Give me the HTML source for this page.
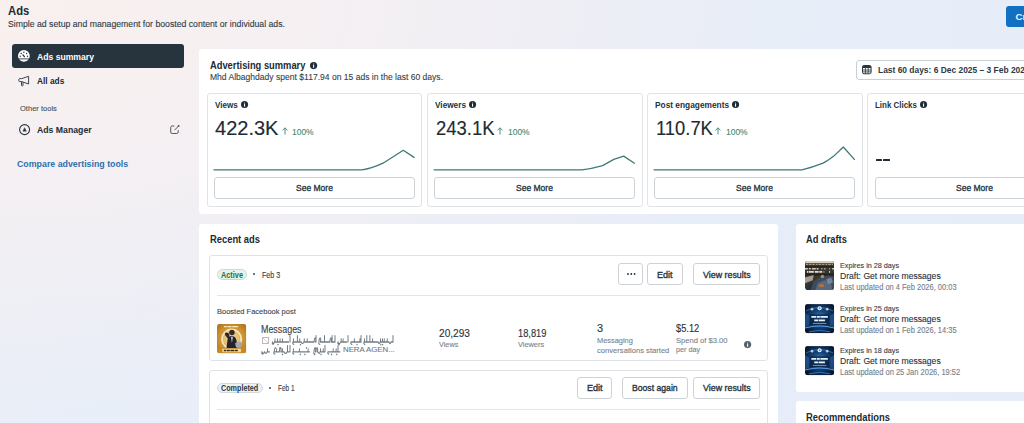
<!DOCTYPE html>
<html><head><meta charset="utf-8"><style>
html,body{margin:0;padding:0;}
body{width:1024px;height:423px;overflow:hidden;position:relative;font-family:"Liberation Sans",sans-serif;background:radial-gradient(ellipse 820px 420px at 0 0,rgba(249,240,238,1) 0%,rgba(247,240,241,0.85) 40%,rgba(240,238,246,0) 100%),linear-gradient(to right,#e9eef8 0%,#e6edf8 100%);}
.t{position:absolute;white-space:nowrap;}
.r{position:absolute;}
svg{position:absolute;overflow:visible;}
</style></head><body>
<div class="t" style="left:7.60px;top:5px;font-size:12.6px;line-height:12.6px;font-weight:700;color:#1c2b33;transform:scaleX(0.8949);transform-origin:0 0;">Ads</div><div class="t" style="left:7.80px;top:19px;font-size:9.7px;line-height:9.7px;font-weight:400;color:#2e3b45;transform:scaleX(0.8975);transform-origin:0 0;-webkit-text-stroke:0.12px #2e3b45;">Simple ad setup and management for boosted content or individual ads.</div><div class="r" style="left:1006px;top:5.6px;width:40px;height:21.3px;background:#1170c4;border-radius:3px;"></div><div class="t" style="left:1015.60px;top:12px;font-size:9.6px;line-height:9.6px;font-weight:700;color:#eef6ff;">Cr</div><div class="r" style="left:12.3px;top:44.3px;width:172.2px;height:24px;background:#27343e;border-radius:3px;"></div><svg style="left:17.9px;top:50.3px" width="11.8" height="11.8" viewBox="0 0 12 12"><circle cx="6" cy="6" r="6" fill="#fff"/><circle cx="2.3" cy="6.4" r="0.7" fill="#27343e"/><circle cx="3.3" cy="3.5" r="0.7" fill="#27343e"/><circle cx="6" cy="2.3" r="0.7" fill="#27343e"/><circle cx="8.7" cy="3.5" r="0.7" fill="#27343e"/><circle cx="9.7" cy="6.4" r="0.7" fill="#27343e"/><path d="M5.1 5.1L6.5 6.8" stroke="#27343e" stroke-width="1.3" stroke-linecap="round"/><rect x="0" y="8.6" width="12" height="0.9" fill="#27343e"/></svg><div class="t" style="left:36.80px;top:52px;font-size:9.9px;line-height:9.9px;font-weight:700;color:#ffffff;transform:scaleX(0.8721);transform-origin:0 0;">Ads summary</div><svg style="left:18px;top:74.5px" width="12.5" height="12.5" viewBox="0 0 12.5 12.5"><path d="M1.4 3.6C0.6 3.6 0.6 6.6 1.4 6.6H3.8L10.6 9V1.3L3.8 3.6Z" stroke="#3b4650" stroke-width="1" fill="none" stroke-linejoin="round"/><path d="M3.5 6.8V10.3C3.5 11.3 5 11.3 5 10.3V7.1" stroke="#3b4650" stroke-width="1" fill="none"/></svg><div class="t" style="left:36.80px;top:76px;font-size:9.4px;line-height:9.4px;font-weight:700;color:#1c2b33;transform:scaleX(0.8891);transform-origin:0 0;">All ads</div><div class="t" style="left:19.70px;top:106px;font-size:7.1px;line-height:7.1px;font-weight:400;color:#4a545c;transform:scaleX(1.0626);transform-origin:0 0;-webkit-text-stroke:0.12px #4a545c;">Other tools</div><svg style="left:18.6px;top:123.6px" width="11.2" height="11.2" viewBox="0 0 11.2 11.2"><circle cx="5.6" cy="5.6" r="5" stroke="#2a3640" stroke-width="1.1" fill="none"/><path d="M3.9 7.2L5.6 3.7L7.3 7.2Z" fill="#2a3640" stroke="#2a3640" stroke-width="0.5" stroke-linejoin="round"/></svg><div class="t" style="left:36.90px;top:125px;font-size:9.6px;line-height:9.6px;font-weight:700;color:#1c2b33;transform:scaleX(0.9075);transform-origin:0 0;">Ads Manager</div><svg style="left:169.8px;top:124.6px" width="9.8" height="9.2" viewBox="0 0 9.8 9.2"><path d="M4.3 1H2.2A1.5 1.5 0 0 0 0.7 2.5V7A1.5 1.5 0 0 0 2.2 8.5H6.7A1.5 1.5 0 0 0 8.2 7V5.2" stroke="#4f575e" stroke-width="1" fill="none"/><path d="M4.6 5.1L8.4 1.2" stroke="#4f575e" stroke-width="1"/><circle cx="8.6" cy="1.1" r="1" fill="#4f575e"/></svg><div class="t" style="left:17.00px;top:159px;font-size:9.9px;line-height:9.9px;font-weight:700;color:#2f70ad;transform:scaleX(0.8929);transform-origin:0 0;">Compare advertising tools</div><div class="r" style="left:199px;top:49px;width:900px;height:165px;background:#fff;border-radius:3px;"></div><div class="t" style="left:209.50px;top:60px;font-size:10.7px;line-height:10.7px;font-weight:700;color:#1c2b33;transform:scaleX(0.8729);transform-origin:0 0;">Advertising summary</div><svg style="left:310.0px;top:61.6px" width="7.2" height="7.2" viewBox="0 0 10 10"><circle cx="5" cy="5" r="5" fill="#1f2d37"/><rect x="4.25" y="4.3" width="1.5" height="3.7" fill="#fff"/><circle cx="5" cy="2.8" r="0.85" fill="#fff"/></svg><div class="t" style="left:209.50px;top:72px;font-size:9.9px;line-height:9.9px;font-weight:400;color:#36434d;transform:scaleX(0.8650);transform-origin:0 0;-webkit-text-stroke:0.12px #36434d;">Mhd Albaghdady spent $117.94 on 15 ads in the last 60 days.</div><div class="r" style="left:855.9px;top:59.8px;width:200px;height:20.3px;background:#fff;border:1px solid #c9cfd4;box-sizing:border-box;border-radius:3px;"></div><svg style="left:862.2px;top:65.2px" width="9.6" height="9.3" viewBox="0 0 9.6 9.3"><rect x="0.5" y="0.5" width="8.6" height="8.3" rx="1.6" fill="none" stroke="#2a3640" stroke-width="1"/><path d="M0.5 2.1A1.6 1.6 0 0 1 2.1 0.5H7.5A1.6 1.6 0 0 1 9.1 2.1V3H0.5Z" fill="#2a3640"/><path d="M3.4 3V8.8M6.2 3V8.8M0.5 5H9.1M0.5 6.9H9.1" stroke="#2a3640" stroke-width="0.8"/></svg><div class="t" style="left:877.70px;top:65px;font-size:9.9px;line-height:9.9px;font-weight:700;color:#2c3a44;transform:scaleX(0.8525);transform-origin:0 0;">Last 60 days: 6 Dec 2025 – 3 Feb 2026</div><div class="r" style="left:206.8px;top:93px;width:215.5px;height:113.5px;background:#fff;border:1px solid #e0e3e7;box-sizing:border-box;border-radius:3px;"></div><div class="t" style="left:214.80px;top:101px;font-size:8.6px;line-height:8.6px;font-weight:700;color:#25333d;transform:scaleX(0.9412);transform-origin:0 0;">Views</div><svg style="left:240.75px;top:101.05px" width="7.1" height="7.1" viewBox="0 0 10 10"><circle cx="5" cy="5" r="5" fill="#1f2d37"/><rect x="4.25" y="4.3" width="1.5" height="3.7" fill="#fff"/><circle cx="5" cy="2.8" r="0.85" fill="#fff"/></svg><div class="t" style="left:215.30px;top:119px;font-size:19.4px;line-height:19.4px;font-weight:400;color:#1c2b33;transform:scaleX(1.0328);transform-origin:0 0;-webkit-text-stroke:0.12px #1c2b33;">422.3K</div><svg style="left:281.8px;top:127.3px" width="6" height="7.5" viewBox="0 0 6 7.5"><path d="M3 7.5V0.9M0.5 3.4L3 0.8L5.5 3.4" stroke="#4f8f80" stroke-width="1" fill="none"/></svg><div class="t" style="left:292.30px;top:127px;font-size:9.9px;line-height:9.9px;font-weight:400;color:#3f8a72;transform:scaleX(0.8571);transform-origin:0 0;-webkit-text-stroke:0.12px #3f8a72;">100%</div><svg style="left:0;top:0" width="1024" height="423"><path d="M213.9 169.8H361.9C368 169.2 376 166.5 383 163.2L403.3 150.3L414 157.4" stroke="#3e7a78" stroke-width="1.3" fill="none" stroke-linejoin="round" stroke-linecap="round"/></svg><div class="r" style="left:214.0px;top:177.1px;width:200.5px;height:22px;background:#fff;border:1px solid #cdd2d7;box-sizing:border-box;border-radius:3px;"></div><div class="t" style="left:295.80px;top:183px;font-size:9.7px;line-height:9.7px;font-weight:400;color:#26333d;transform:scaleX(0.8775);transform-origin:0 0;-webkit-text-stroke:0.35px #26333d;">See More</div><div class="r" style="left:427.1px;top:93px;width:215.5px;height:113.5px;background:#fff;border:1px solid #e0e3e7;box-sizing:border-box;border-radius:3px;"></div><div class="t" style="left:435.10px;top:101px;font-size:8.6px;line-height:8.6px;font-weight:700;color:#25333d;transform:scaleX(0.9582);transform-origin:0 0;">Viewers</div><svg style="left:468.95px;top:101.05px" width="7.1" height="7.1" viewBox="0 0 10 10"><circle cx="5" cy="5" r="5" fill="#1f2d37"/><rect x="4.25" y="4.3" width="1.5" height="3.7" fill="#fff"/><circle cx="5" cy="2.8" r="0.85" fill="#fff"/></svg><div class="t" style="left:435.60px;top:119px;font-size:19.4px;line-height:19.4px;font-weight:400;color:#1c2b33;transform:scaleX(0.9531);transform-origin:0 0;-webkit-text-stroke:0.12px #1c2b33;">243.1K</div><svg style="left:496.7px;top:127.3px" width="6" height="7.5" viewBox="0 0 6 7.5"><path d="M3 7.5V0.9M0.5 3.4L3 0.8L5.5 3.4" stroke="#4f8f80" stroke-width="1" fill="none"/></svg><div class="t" style="left:507.60px;top:127px;font-size:9.9px;line-height:9.9px;font-weight:400;color:#3f8a72;transform:scaleX(0.8571);transform-origin:0 0;-webkit-text-stroke:0.12px #3f8a72;">100%</div><svg style="left:0;top:0" width="1024" height="423"><path d="M434.1 169.8H581.9C588 169.2 596 167.5 602.6 165.6L613.8 159.4L623.7 156.1L634.4 163.2" stroke="#3e7a78" stroke-width="1.3" fill="none" stroke-linejoin="round" stroke-linecap="round"/></svg><div class="r" style="left:434.3px;top:177.1px;width:200.5px;height:22px;background:#fff;border:1px solid #cdd2d7;box-sizing:border-box;border-radius:3px;"></div><div class="t" style="left:516.10px;top:183px;font-size:9.7px;line-height:9.7px;font-weight:400;color:#26333d;transform:scaleX(0.8775);transform-origin:0 0;-webkit-text-stroke:0.35px #26333d;">See More</div><div class="r" style="left:647.1px;top:93px;width:215.5px;height:113.5px;background:#fff;border:1px solid #e0e3e7;box-sizing:border-box;border-radius:3px;"></div><div class="t" style="left:655.10px;top:101px;font-size:8.6px;line-height:8.6px;font-weight:700;color:#25333d;transform:scaleX(0.9692);transform-origin:0 0;">Post engagements</div><svg style="left:731.6500000000001px;top:101.05px" width="7.1" height="7.1" viewBox="0 0 10 10"><circle cx="5" cy="5" r="5" fill="#1f2d37"/><rect x="4.25" y="4.3" width="1.5" height="3.7" fill="#fff"/><circle cx="5" cy="2.8" r="0.85" fill="#fff"/></svg><div class="t" style="left:655.60px;top:119px;font-size:19.4px;line-height:19.4px;font-weight:400;color:#1c2b33;transform:scaleX(0.9477);transform-origin:0 0;-webkit-text-stroke:0.12px #1c2b33;">110.7K</div><svg style="left:715.3px;top:127.3px" width="6" height="7.5" viewBox="0 0 6 7.5"><path d="M3 7.5V0.9M0.5 3.4L3 0.8L5.5 3.4" stroke="#4f8f80" stroke-width="1" fill="none"/></svg><div class="t" style="left:725.90px;top:127px;font-size:9.9px;line-height:9.9px;font-weight:400;color:#3f8a72;transform:scaleX(0.8571);transform-origin:0 0;-webkit-text-stroke:0.12px #3f8a72;">100%</div><svg style="left:0;top:0" width="1024" height="423"><path d="M654.1 169.8H801.9C808 168.5 816 166 823 163.2C827 161.2 830 159 833.8 156.1L843.3 147L854.4 159.4" stroke="#3e7a78" stroke-width="1.3" fill="none" stroke-linejoin="round" stroke-linecap="round"/></svg><div class="r" style="left:654.3000000000001px;top:177.1px;width:200.5px;height:22px;background:#fff;border:1px solid #cdd2d7;box-sizing:border-box;border-radius:3px;"></div><div class="t" style="left:736.10px;top:183px;font-size:9.7px;line-height:9.7px;font-weight:400;color:#26333d;transform:scaleX(0.8775);transform-origin:0 0;-webkit-text-stroke:0.35px #26333d;">See More</div><div class="r" style="left:867.3px;top:93px;width:215.5px;height:113.5px;background:#fff;border:1px solid #e0e3e7;box-sizing:border-box;border-radius:3px;"></div><div class="t" style="left:875.30px;top:101px;font-size:8.6px;line-height:8.6px;font-weight:700;color:#25333d;transform:scaleX(0.9229);transform-origin:0 0;">Link Clicks</div><svg style="left:920.0500000000001px;top:101.05px" width="7.1" height="7.1" viewBox="0 0 10 10"><circle cx="5" cy="5" r="5" fill="#1f2d37"/><rect x="4.25" y="4.3" width="1.5" height="3.7" fill="#fff"/><circle cx="5" cy="2.8" r="0.85" fill="#fff"/></svg><div class="r" style="left:875.6px;top:158.9px;width:6.4px;height:2.1px;background:#1f2b35;border-radius:0.5px;"></div><div class="r" style="left:883.4px;top:158.9px;width:6.4px;height:2.1px;background:#1f2b35;border-radius:0.5px;"></div><div class="r" style="left:874.5px;top:177.1px;width:200.5px;height:22px;background:#fff;border:1px solid #cdd2d7;box-sizing:border-box;border-radius:3px;"></div><div class="t" style="left:956.30px;top:183px;font-size:9.7px;line-height:9.7px;font-weight:400;color:#26333d;transform:scaleX(0.8775);transform-origin:0 0;-webkit-text-stroke:0.35px #26333d;">See More</div><div class="r" style="left:199px;top:224px;width:579px;height:300px;background:#fff;border-radius:3px;"></div><div class="t" style="left:209.70px;top:235px;font-size:10.3px;line-height:10.3px;font-weight:700;color:#1c2b33;transform:scaleX(0.9099);transform-origin:0 0;">Recent ads</div><div class="r" style="left:209.2px;top:255.3px;width:559px;height:106px;background:#fff;border:1px solid #dfe3e7;box-sizing:border-box;border-radius:3px;"></div><div class="r" style="left:217px;top:269.2px;width:30.3px;height:10.4px;background:#e6f3ea;border:1px solid #c3dfca;box-sizing:border-box;border-radius:6px;"></div><div class="t" style="left:221.30px;top:271px;font-size:8.3px;line-height:8.3px;font-weight:700;color:#23704a;transform:scaleX(0.8832);transform-origin:0 0;">Active</div><div class="r" style="left:253px;top:273.3px;width:2px;height:2px;background:#3b4852;border-radius:2px;"></div><div class="t" style="left:261.70px;top:271px;font-size:8.3px;line-height:8.3px;font-weight:400;color:#33404a;transform:scaleX(0.8576);transform-origin:0 0;-webkit-text-stroke:0.12px #33404a;">Feb 3</div><div class="r" style="left:618.3px;top:263.2px;width:24.4px;height:22px;background:#fff;border:1px solid #cdd2d7;box-sizing:border-box;border-radius:3px;"></div><svg style="left:626.5px;top:273.2px" width="9" height="2" viewBox="0 0 9 2"><circle cx="1" cy="1" r="0.9" fill="#1f2d37"/><circle cx="4.3" cy="1" r="0.9" fill="#1f2d37"/><circle cx="7.6" cy="1" r="0.9" fill="#1f2d37"/></svg><div class="r" style="left:647.3px;top:263.2px;width:35.7px;height:22px;background:#fff;border:1px solid #cdd2d7;box-sizing:border-box;border-radius:3px;"></div><div class="t" style="left:657.35px;top:270px;font-size:9.5px;line-height:9.5px;font-weight:400;color:#26333d;transform:scaleX(0.9530);transform-origin:0 0;-webkit-text-stroke:0.35px #26333d;">Edit</div><div class="r" style="left:693px;top:263.2px;width:67.4px;height:22px;background:#fff;border:1px solid #cdd2d7;box-sizing:border-box;border-radius:3px;"></div><div class="t" style="left:702.90px;top:270px;font-size:9.5px;line-height:9.5px;font-weight:400;color:#26333d;transform:scaleX(0.9327);transform-origin:0 0;-webkit-text-stroke:0.35px #26333d;">View results</div><div class="r" style="left:217px;top:295.2px;width:543.4px;height:1px;background:#e2e5e9;border-radius:0px;"></div><div class="t" style="left:217.00px;top:308px;font-size:7.8px;line-height:7.8px;font-weight:400;color:#3d4850;transform:scaleX(0.9616);transform-origin:0 0;-webkit-text-stroke:0.12px #3d4850;">Boosted Facebook post</div><svg style="left:216.8px;top:323.5px" width="29.3" height="29.3" viewBox="0 0 30 30"><defs><radialGradient id="g1" cx="50%" cy="50%" r="70%"><stop offset="0" stop-color="#f5dc9a"/><stop offset="0.5" stop-color="#d49a38"/><stop offset="1" stop-color="#a96f1a"/></radialGradient><clipPath id="cpg"><rect width="30" height="30" rx="2.5"/></clipPath></defs><g clip-path="url(#cpg)"><rect width="30" height="30" fill="url(#g1)"/><circle cx="15" cy="15.5" r="9.8" fill="none" stroke="#fbf1d2" stroke-width="2" opacity="0.85"/><circle cx="15" cy="15.5" r="8.5" fill="#ead28f" opacity="0.55"/><path d="M7 2.6H23" stroke="#fff3cf" stroke-width="1.3" stroke-dasharray="3 0.8 4 0.8 6" opacity="0.9"/><path d="M9.5 26L10.8 16C11.5 13 13.5 12 15.5 12.2C18 12.5 19.5 14 20 17L21 26Z" fill="#24242c"/><path d="M11.5 15.5L8.2 11C7.8 9.8 8.5 8.5 9.6 8.8L12.3 9.6L12.8 12.5Z" fill="#28283a"/><circle cx="15.3" cy="8.6" r="2.8" fill="#3a2a1f"/><path d="M14.4 13L15.3 19.5L16.2 13Z" fill="#eaeaea"/><path d="M18.5 19.5L24.5 18L25.5 23L19.5 24Z" fill="#a3a9b1"/><rect x="0" y="24.6" width="30" height="5.4" fill="#c48a2a"/><rect x="5.5" y="25.3" width="19" height="3.6" rx="0.5" fill="#efd9a0"/><path d="M7 27.1H23" stroke="#3a2a16" stroke-width="1.5" stroke-dasharray="2.5 0.6 3 0.6 4 0.6 3" /></g></svg><div class="t" style="left:261.20px;top:324px;font-size:10.6px;line-height:10.6px;font-weight:400;color:#36424c;transform:scaleX(0.8404);transform-origin:0 0;-webkit-text-stroke:0.12px #36424c;">Messages</div><div class="r" style="left:261.8px;top:336.6px;width:7px;height:7px;background:#fff;border:1px solid #c6b7b4;box-sizing:border-box;border-radius:0.5px;"></div><svg style="left:262.8px;top:337.6px" width="5" height="5" viewBox="0 0 5 5"><path d="M0 0L5 5" stroke="#c6b7b4" stroke-width="0.7"/></svg><svg style="left:0;top:0" width="1024" height="423"><g transform="translate(0 342) scale(1 1.3) translate(0 -342)"><path d="M272.5 342.0Q273.5 344.4 274.5 342.0L274.8 342.0L275.0 339.7M275.0 342.0L277.1 342.0L277.4 342.0L277.6 339.7M277.6 342.0L279.6 342.0L279.9 342.0L280.1 339.7M280.1 342.0L282.0 342.0L282.3 342.0L282.5 339.7M282.5 342.0L284.1 342.0L286.7 342.0L288.6 342.0M272.5 342.0Q271.7 343.5 273.3 343.8M290.0 342.0L290.0 337.1M293.0 342.0L293.3 342.0L293.5 339.7M293.5 342.0L295.0 342.0L297.0 342.0L297.4 342.0L297.4 337.2M297.4 342.0L299.3 342.0L299.6 342.0L299.8 339.7M299.8 342.0L301.2 342.0Q302.5 344.4 303.8 342.0L304.1 342.0L304.3 339.7M304.3 342.0L306.8 342.0L307.1 342.0L307.3 339.7M307.3 342.0L309.4 342.0L312.2 342.0L314.1 342.0L314.1 342.0Q314.3 338.8 315.4 339.0Q316.3 339.5 315.5 342.0L316.0 342.0M293.0 342.0Q292.2 343.5 293.8 343.8M316.0 342.0L316.0 337.1M319.0 342.0L319.0 342.0Q319.2 338.8 320.3 339.0Q321.2 339.5 320.4 342.0L321.9 342.0L324.1 342.0L324.5 342.0L324.5 337.2M324.5 342.0L326.7 342.0L329.8 342.0L329.8 342.0Q330.0 338.8 331.1 339.0Q332.0 339.5 331.2 342.0L331.7 342.0L332.1 342.0L332.1 337.2M332.1 342.0L334.9 342.0M319.0 342.0Q318.2 343.5 319.8 343.8M335.0 342.0L335.0 337.1M338.0 342.0Q339.4 344.4 340.7 342.0L341.0 342.0L341.2 339.7M341.2 342.0L342.6 342.0L342.9 342.0L343.1 339.7M343.1 342.0L344.8 342.0L346.7 342.0M338.0 342.0Q337.2 343.5 338.8 343.8M348.0 342.0L348.0 337.1M351.0 342.0L353.9 342.0L354.2 342.0L354.4 339.7M354.4 342.0L356.3 342.0L359.5 342.0L359.8 342.0L360.0 339.7M360.0 342.0L361.0 342.0M351.0 342.0Q350.2 343.5 351.8 343.8M361.0 342.0L361.0 337.1M364.0 342.0L364.3 342.0L364.5 339.7M364.5 342.0L366.4 342.0L366.8 342.0L366.8 337.2M366.8 342.0L369.5 342.0L369.9 342.0L369.9 337.2M369.9 342.0L372.2 342.0L372.5 342.0L372.7 339.7M372.7 342.0L375.2 342.0L378.2 342.0Q379.1 344.4 380.1 342.0L380.4 342.0L380.6 339.7M380.6 342.0L382.0 342.0L382.3 342.0L382.5 339.7M382.5 342.0L383.8 342.0L384.1 342.0L384.3 339.7M384.3 342.0L386.8 342.0L387.1 342.0L387.3 339.7M387.3 342.0L389.0 342.0Q390.0 344.4 391.0 342.0L393.0 342.0M364.0 342.0Q363.2 343.5 364.8 343.8M393.0 342.0L393.0 337.1" stroke="#737c84" stroke-width="1.0" fill="none" stroke-linecap="round" stroke-linejoin="round"/><circle cx="278.0" cy="344.0" r="0.65" fill="#737c84"/><circle cx="300.5" cy="344.0" r="0.65" fill="#737c84"/><circle cx="339.0" cy="344.0" r="0.65" fill="#737c84"/><circle cx="357.0" cy="344.0" r="0.65" fill="#737c84"/><circle cx="380.8" cy="344.0" r="0.65" fill="#737c84"/><circle cx="382.6" cy="344.0" r="0.65" fill="#737c84"/></g><g transform="translate(0 351.8) scale(1 1.3) translate(0 -351.8)"><path d="M262.0 351.8Q263.3 354.2 264.6 351.8Q265.8 354.2 267.1 351.8L267.4 351.8L267.6 349.5M267.6 351.8L269.6 351.8M262.0 351.8Q261.2 353.3 262.8 353.6M274.0 351.8L274.3 351.8L274.5 349.5M274.5 351.8L276.2 351.8L276.5 351.8L276.7 349.5M276.7 351.8L279.4 351.8L279.4 351.8Q279.6 348.6 280.7 348.8Q281.6 349.3 280.8 351.8L282.1 351.8L282.4 351.8L282.6 349.5M282.6 351.8L284.1 351.8Q285.6 354.2 287.1 351.8L287.5 351.8L287.5 347.0M287.5 351.8L289.6 351.8M274.0 351.8Q273.2 353.3 274.8 353.6M290.0 351.8L290.0 346.9M293.0 351.8L293.3 351.8L293.5 349.5M293.5 351.8L296.2 351.8L299.0 351.8L299.3 351.8L299.5 349.5M299.5 351.8L301.2 351.8L303.5 351.8L305.3 351.8L307.7 351.8L308.0 351.8L308.2 349.5M308.2 351.8L309.6 351.8M293.0 351.8Q292.2 353.3 293.8 353.6M314.0 351.8L314.0 351.8Q314.2 348.6 315.3 348.8Q316.2 349.3 315.4 351.8L316.0 351.8L316.0 351.8Q316.2 348.6 317.3 348.8Q318.2 349.3 317.4 351.8L318.0 351.8Q319.0 354.2 320.1 351.8L320.4 351.8L320.6 349.5M320.6 351.8L322.8 351.8L323.1 351.8L323.3 349.5M323.3 351.8L325.0 351.8M314.0 351.8Q313.2 353.3 314.8 353.6M325.0 351.8L325.0 346.9M328.0 351.8L330.1 351.8L332.8 351.8L333.1 351.8L333.3 349.5M333.3 351.8L335.7 351.8L336.0 351.8L336.2 349.5M336.2 351.8L337.6 351.8L338.0 351.8L338.0 347.0M338.0 351.8L339.9 351.8M328.0 351.8Q327.2 353.3 328.8 353.6" stroke="#737c84" stroke-width="1.0" fill="none" stroke-linecap="round" stroke-linejoin="round"/><circle cx="275.3" cy="348.8" r="0.65" fill="#737c84"/><circle cx="279.9" cy="348.8" r="0.65" fill="#737c84"/><circle cx="282.6" cy="353.8" r="0.65" fill="#737c84"/><circle cx="300.3" cy="353.8" r="0.65" fill="#737c84"/><circle cx="304.9" cy="353.8" r="0.65" fill="#737c84"/><circle cx="306.5" cy="348.8" r="0.65" fill="#737c84"/><circle cx="314.6" cy="353.8" r="0.65" fill="#737c84"/><circle cx="321.0" cy="353.8" r="0.65" fill="#737c84"/><circle cx="331.6" cy="353.8" r="0.65" fill="#737c84"/><circle cx="336.8" cy="353.8" r="0.65" fill="#737c84"/></g></svg><div class="t" style="left:342.80px;top:346px;font-size:8.1px;line-height:8.1px;font-weight:400;color:#6f7a83;transform:scaleX(0.9670);transform-origin:0 0;-webkit-text-stroke:0.12px #6f7a83;">NERA AGEN...</div><div class="t" style="left:438.60px;top:328px;font-size:10.7px;line-height:10.7px;font-weight:400;color:#26333d;transform:scaleX(0.9473);transform-origin:0 0;-webkit-text-stroke:0.12px #26333d;">20,293</div><div class="t" style="left:438.60px;top:341px;font-size:7.7px;line-height:7.7px;font-weight:400;color:#7a848c;transform:scaleX(0.9461);transform-origin:0 0;-webkit-text-stroke:0.12px #7a848c;">Views</div><div class="t" style="left:517.80px;top:328px;font-size:10.7px;line-height:10.7px;font-weight:400;color:#26333d;transform:scaleX(0.8679);transform-origin:0 0;-webkit-text-stroke:0.12px #26333d;">18,819</div><div class="t" style="left:517.80px;top:341px;font-size:7.7px;line-height:7.7px;font-weight:400;color:#7a848c;transform:scaleX(0.9579);transform-origin:0 0;-webkit-text-stroke:0.12px #7a848c;">Viewers</div><div class="t" style="left:597.00px;top:323px;font-size:10.9px;line-height:10.9px;font-weight:400;color:#26333d;-webkit-text-stroke:0.12px #26333d;">3</div><div class="t" style="left:597.00px;top:337px;font-size:8.1px;line-height:8.1px;font-weight:400;color:#7a848c;transform:scaleX(0.9166);transform-origin:0 0;-webkit-text-stroke:0.12px #7a848c;">Messaging</div><div class="t" style="left:597.00px;top:347px;font-size:8.1px;line-height:8.1px;font-weight:400;color:#7a848c;transform:scaleX(0.9405);transform-origin:0 0;-webkit-text-stroke:0.12px #7a848c;">conversations started</div><div class="t" style="left:676.40px;top:323px;font-size:10.9px;line-height:10.9px;font-weight:400;color:#26333d;transform:scaleX(0.8506);transform-origin:0 0;-webkit-text-stroke:0.12px #26333d;">$5.12</div><div class="t" style="left:676.40px;top:337px;font-size:8.1px;line-height:8.1px;font-weight:400;color:#7a848c;transform:scaleX(0.9373);transform-origin:0 0;-webkit-text-stroke:0.12px #7a848c;">Spend of $3.00</div><div class="t" style="left:676.40px;top:346px;font-size:8.1px;line-height:8.1px;font-weight:400;color:#7a848c;transform:scaleX(0.8921);transform-origin:0 0;-webkit-text-stroke:0.12px #7a848c;">per day</div><svg style="left:743.8px;top:340.79999999999995px" width="7.2" height="7.2" viewBox="0 0 10 10"><circle cx="5" cy="5" r="5" fill="#56616b"/><rect x="4.25" y="4.3" width="1.5" height="3.7" fill="#fff"/><circle cx="5" cy="2.8" r="0.85" fill="#fff"/></svg><div class="r" style="left:209.1px;top:369.5px;width:559px;height:120px;background:#fff;border:1px solid #dfe3e7;box-sizing:border-box;border-radius:3px;"></div><div class="r" style="left:217.1px;top:382.8px;width:45.5px;height:10.3px;background:#eef1f4;border:1px solid #d3d8dd;box-sizing:border-box;border-radius:6px;"></div><div class="t" style="left:221.20px;top:384px;font-size:8.6px;line-height:8.6px;font-weight:700;color:#2c3a44;transform:scaleX(0.8395);transform-origin:0 0;">Completed</div><div class="r" style="left:269.2px;top:387px;width:2px;height:2px;background:#3b4852;border-radius:2px;"></div><div class="t" style="left:277.70px;top:384px;font-size:9.2px;line-height:9.2px;font-weight:400;color:#33404a;transform:scaleX(0.7014);transform-origin:0 0;-webkit-text-stroke:0.12px #33404a;">Feb 1</div><div class="r" style="left:577.1px;top:376.9px;width:34.9px;height:22px;background:#fff;border:1px solid #cdd2d7;box-sizing:border-box;border-radius:3px;"></div><div class="t" style="left:586.75px;top:383px;font-size:9.5px;line-height:9.5px;font-weight:400;color:#26333d;transform:scaleX(0.9530);transform-origin:0 0;-webkit-text-stroke:0.35px #26333d;">Edit</div><div class="r" style="left:622.1px;top:376.9px;width:65.6px;height:22px;background:#fff;border:1px solid #cdd2d7;box-sizing:border-box;border-radius:3px;"></div><div class="t" style="left:632.10px;top:383px;font-size:9.5px;line-height:9.5px;font-weight:400;color:#26333d;transform:scaleX(0.9088);transform-origin:0 0;-webkit-text-stroke:0.35px #26333d;">Boost again</div><div class="r" style="left:693.1px;top:376.9px;width:67.3px;height:22px;background:#fff;border:1px solid #cdd2d7;box-sizing:border-box;border-radius:3px;"></div><div class="t" style="left:702.95px;top:383px;font-size:9.5px;line-height:9.5px;font-weight:400;color:#26333d;transform:scaleX(0.9327);transform-origin:0 0;-webkit-text-stroke:0.35px #26333d;">View results</div><div class="r" style="left:217px;top:408.6px;width:543.4px;height:1px;background:#e2e5e9;border-radius:0px;"></div><div class="t" style="left:217.00px;top:422px;font-size:7.8px;line-height:7.8px;font-weight:400;color:#3d4850;transform:scaleX(0.9616);transform-origin:0 0;-webkit-text-stroke:0.12px #3d4850;">Boosted Facebook post</div><div class="r" style="left:795.6px;top:223.7px;width:300px;height:168px;background:#fff;border-radius:3px;"></div><div class="t" style="left:806.30px;top:235px;font-size:10.3px;line-height:10.3px;font-weight:700;color:#1c2b33;transform:scaleX(0.9048);transform-origin:0 0;">Ad drafts</div><svg style="left:805.4px;top:261.3px" width="29" height="29" viewBox="0 0 30 30"><defs><clipPath id="cp0"><rect width="30" height="30" rx="2.5"/></clipPath></defs><g clip-path="url(#cp0)"><rect width="30" height="30" fill="#3a3632"/><rect y="0" width="30" height="2.2" fill="#d9d0c0"/><path d="M1 3.5H29" stroke="#a89c8a" stroke-width="1.2" stroke-dasharray="2 0.8 3 0.8 2.5 1"/><rect y="5.5" width="30" height="1" fill="#1e1b18"/><path d="M0 8H30" stroke="#cfc5b2" stroke-width="1.6" stroke-dasharray="3 1 2 1.2 4 0.8 2"/><path d="M2 11.2H28" stroke="#e4dccb" stroke-width="1.8" stroke-dasharray="1.5 0.6 5 1 4 0.7 3"/><rect y="13" width="30" height="2" fill="#23201d"/><path d="M0 17L9 14.5L8 20L0 23Z" fill="#c9c2b5" opacity="0.75"/><path d="M6 30L9 21L16 16.5L24 15L30 16.5V30Z" fill="#3e4b5b"/><path d="M11 30L13 23L20 20L27 22L28 30Z" fill="#58687d"/><path d="M1 30L3 24L7 23L6 30Z" fill="#243140"/><circle cx="18" cy="16" r="1.8" fill="#b59574" opacity="0.9"/><ellipse cx="17" cy="25.5" rx="2.8" ry="1.6" fill="#c26b34"/><path d="M22 19L27 17L29 22L24 24Z" fill="#8595aa" opacity="0.8"/></g></svg><div class="t" style="left:839.80px;top:262px;font-size:7.5px;line-height:7.5px;font-weight:400;color:#36424c;transform:scaleX(0.9644);transform-origin:0 0;-webkit-text-stroke:0.12px #36424c;">Expires in 28 days</div><div class="t" style="left:839.80px;top:271px;font-size:9.7px;line-height:9.7px;font-weight:400;color:#26333d;transform:scaleX(0.8863);transform-origin:0 0;-webkit-text-stroke:0.12px #26333d;">Draft: Get more messages</div><div class="t" style="left:839.80px;top:282px;font-size:9.4px;line-height:9.4px;font-weight:400;color:#75808a;transform:scaleX(0.7989);transform-origin:0 0;-webkit-text-stroke:0.12px #75808a;">Last updated on 4 Feb 2026, 00:03</div><svg style="left:805.4px;top:303.7px" width="29.2" height="29.4" viewBox="0 0 30 30"><defs><radialGradient id="gb1" cx="50%" cy="48%" r="62%"><stop offset="0" stop-color="#3d88d2"/><stop offset="0.4" stop-color="#18487f"/><stop offset="1" stop-color="#06142a"/></radialGradient><clipPath id="cpb1"><rect width="30" height="30" rx="2.5"/></clipPath></defs><g clip-path="url(#cpb1)"><rect width="30" height="30" fill="url(#gb1)"/><path d="M1 7Q15 0 29 7" stroke="#7cc2ff" stroke-width="0.7" fill="none" opacity="0.6"/><circle cx="7.2" cy="5.2" r="1.4" fill="#9fd0ff"/><circle cx="15" cy="4.3" r="2.1" fill="#eef7ff"/><circle cx="15" cy="4.3" r="1" fill="#4a86c0"/><circle cx="22.8" cy="5.2" r="1.4" fill="#9fd0ff"/><rect x="5" y="10.5" width="20" height="11" fill="#08203f" opacity="0.7"/><path d="M6.5 13.2H23.5" stroke="#f4f9ff" stroke-width="1.8" stroke-dasharray="5 0.7 3 0.6 8" opacity="0.95"/><path d="M9.5 16.8H20.5" stroke="#f4f9ff" stroke-width="1.9" stroke-dasharray="4 0.6 7" opacity="0.95"/><rect x="8" y="19.5" width="14" height="0.8" fill="#9cc8f0" opacity="0.8"/><path d="M0 24.5Q15 20.5 30 24.5" stroke="#6cb6ff" stroke-width="1.1" fill="none" opacity="0.8"/><path d="M4 28.5Q15 25.5 26 28.5" stroke="#4a98e8" stroke-width="1" fill="none" opacity="0.7"/><path d="M0 9L4 12V22L0 25Z M30 9L26 12V22L30 25Z" fill="#3a8ae0" opacity="0.35"/></g></svg><div class="t" style="left:839.80px;top:305px;font-size:7.5px;line-height:7.5px;font-weight:400;color:#36424c;transform:scaleX(0.9644);transform-origin:0 0;-webkit-text-stroke:0.12px #36424c;">Expires in 25 days</div><div class="t" style="left:839.80px;top:314px;font-size:9.7px;line-height:9.7px;font-weight:400;color:#26333d;transform:scaleX(0.8863);transform-origin:0 0;-webkit-text-stroke:0.12px #26333d;">Draft: Get more messages</div><div class="t" style="left:839.80px;top:325px;font-size:9.4px;line-height:9.4px;font-weight:400;color:#75808a;transform:scaleX(0.7989);transform-origin:0 0;-webkit-text-stroke:0.12px #75808a;">Last updated on 1 Feb 2026, 14:35</div><svg style="left:805.4px;top:346.1px" width="29.2" height="29.4" viewBox="0 0 30 30"><defs><radialGradient id="gb2" cx="50%" cy="48%" r="62%"><stop offset="0" stop-color="#3d88d2"/><stop offset="0.4" stop-color="#18487f"/><stop offset="1" stop-color="#06142a"/></radialGradient><clipPath id="cpb2"><rect width="30" height="30" rx="2.5"/></clipPath></defs><g clip-path="url(#cpb2)"><rect width="30" height="30" fill="url(#gb2)"/><path d="M1 7Q15 0 29 7" stroke="#7cc2ff" stroke-width="0.7" fill="none" opacity="0.6"/><circle cx="7.2" cy="5.2" r="1.4" fill="#9fd0ff"/><circle cx="15" cy="4.3" r="2.1" fill="#eef7ff"/><circle cx="15" cy="4.3" r="1" fill="#4a86c0"/><circle cx="22.8" cy="5.2" r="1.4" fill="#9fd0ff"/><rect x="5" y="10.5" width="20" height="11" fill="#08203f" opacity="0.7"/><path d="M6.5 13.2H23.5" stroke="#f4f9ff" stroke-width="1.8" stroke-dasharray="5 0.7 3 0.6 8" opacity="0.95"/><path d="M9.5 16.8H20.5" stroke="#f4f9ff" stroke-width="1.9" stroke-dasharray="4 0.6 7" opacity="0.95"/><rect x="8" y="19.5" width="14" height="0.8" fill="#9cc8f0" opacity="0.8"/><path d="M0 24.5Q15 20.5 30 24.5" stroke="#6cb6ff" stroke-width="1.1" fill="none" opacity="0.8"/><path d="M4 28.5Q15 25.5 26 28.5" stroke="#4a98e8" stroke-width="1" fill="none" opacity="0.7"/><path d="M0 9L4 12V22L0 25Z M30 9L26 12V22L30 25Z" fill="#3a8ae0" opacity="0.35"/></g></svg><div class="t" style="left:839.80px;top:347px;font-size:7.5px;line-height:7.5px;font-weight:400;color:#36424c;transform:scaleX(0.9644);transform-origin:0 0;-webkit-text-stroke:0.12px #36424c;">Expires in 18 days</div><div class="t" style="left:839.80px;top:356px;font-size:9.7px;line-height:9.7px;font-weight:400;color:#26333d;transform:scaleX(0.8863);transform-origin:0 0;-webkit-text-stroke:0.12px #26333d;">Draft: Get more messages</div><div class="t" style="left:839.80px;top:367px;font-size:9.4px;line-height:9.4px;font-weight:400;color:#75808a;transform:scaleX(0.8006);transform-origin:0 0;-webkit-text-stroke:0.12px #75808a;">Last updated on 25 Jan 2026, 19:52</div><div class="r" style="left:795.6px;top:401px;width:300px;height:100px;background:#fff;border-radius:3px;"></div><div class="t" style="left:806.00px;top:411px;font-size:11.6px;line-height:11.6px;font-weight:700;color:#1c2b33;transform:scaleX(0.8095);transform-origin:0 0;">Recommendations</div>
</body></html>
